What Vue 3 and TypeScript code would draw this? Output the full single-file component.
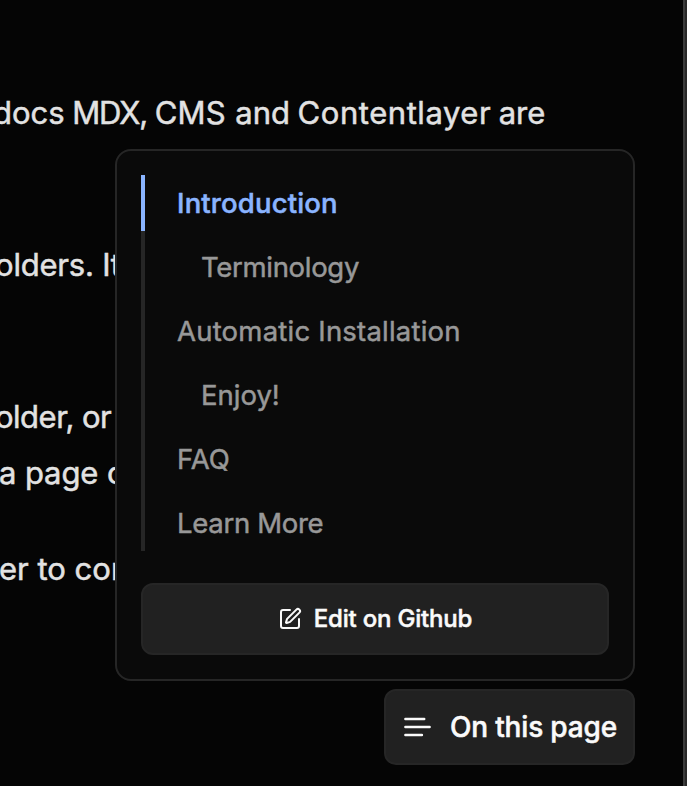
<script setup lang="ts">
interface TocItem {
  title: string
  depth: number
  cls: string
}

const toc: TocItem[] = [
  { title: 'Introduction', depth: 0, cls: 'introduction' },
  { title: 'Terminology', depth: 1, cls: 'terminology' },
  { title: 'Automatic Installation', depth: 0, cls: 'installation' },
  { title: 'Enjoy!', depth: 1, cls: 'enjoy' },
  { title: 'FAQ', depth: 0, cls: 'faq' },
  { title: 'Learn More', depth: 0, cls: 'learn' },
]
const active = 'Introduction'
</script>

<template>
  <div class="page">
    <main class="article">
      <p class="sources">docs <span class="mdx">MDX,</span> <span class="cms">CMS</span> and <span class="wide">Contentlayer</span> are</p>
      <p class="folders">olders. It</p>
      <p class="or">older, or</p>
      <p class="file">a page c</p>
      <p class="order">er to con</p>
    </main>
    <div class="scroll-edge"></div>

    <div class="floating">
      <section class="popover">
        <nav class="toc">
          <a
            v-for="item in toc"
            :key="item.title"
            :class="['item', item.cls, { nested: item.depth > 0, active: item.title === active }]"
          >{{ item.title }}</a>
        </nav>
        <button class="edit" type="button">
          <svg viewBox="0 0 24 24" width="24" height="24" fill="none" stroke="currentColor" stroke-width="2" stroke-linecap="round" stroke-linejoin="round">
            <path d="M12 3H5a2 2 0 0 0-2 2v14a2 2 0 0 0 2 2h14a2 2 0 0 0 2-2v-7" />
            <path d="M18.375 2.625a1 1 0 0 1 3 3l-9.013 9.014a2 2 0 0 1-.853.505l-2.873.84a.5.5 0 0 1-.62-.62l.84-2.873a2 2 0 0 1 .506-.852z" />
          </svg>
          <span>Edit on Github</span>
        </button>
      </section>
      <button class="trigger" type="button">
        <svg viewBox="0 0 32 32" width="32" height="32" fill="none" stroke="currentColor" stroke-width="2.5" stroke-linecap="round">
          <path d="M3.4 8.1h18.8M3.4 16.1h24.2M3.4 24.1h16.5" />
        </svg>
        <span>On this page</span>
      </button>
    </div>
  </div>
</template>

<style>
body {
  background: #050505;
}
</style>

<style scoped>
.page {
  position: relative;
  display: flex;
  justify-content: space-between;
  box-sizing: border-box;
  width: 687px;
  height: 786px;
  overflow: hidden;
  background: #050505;
  color: #e2e2e2;
  font-family: Inter, 'Liberation Sans', sans-serif;
  -webkit-text-stroke: 0.5px currentColor;
}
.article {
  width: 683px;
  padding-top: 85px;
  white-space: nowrap;
  font-size: 31px;
  line-height: 56px;
}
.article p {
  margin: 0 0 96px;
}
.article .or {
  margin-bottom: 0;
  letter-spacing: -0.5px;
}
.article .file {
  margin-bottom: 40px;
  letter-spacing: -0.1px;
}
.article .sources {
  margin-left: -7px;
  word-spacing: -1.2px;
}
.mdx {
  letter-spacing: -1.1px;
}
.cms {
  margin-right: 2px;
  letter-spacing: 0.2px;
}
.wide {
  letter-spacing: 0.55px;
}
.article .folders,
.article .or {
  margin-left: -5px;
}
.article .folders {
  letter-spacing: -0.2px;
}
.article .file,
.article .order {
  margin-left: -1px;
}
.scroll-edge {
  box-sizing: border-box;
  width: 4px;
  border-left: 2px solid #3c3c3c;
  background: #292929;
}
.floating {
  position: absolute;
  top: 149px;
  right: 52px;
  display: flex;
  flex-direction: column;
  align-items: flex-end;
  gap: 8px;
  width: 520px;
}
.popover {
  display: flex;
  flex-direction: column;
  gap: 32px;
  box-sizing: border-box;
  width: 520px;
  height: 532px;
  padding: 24px;
  border: 2px solid #262626;
  border-radius: 16px;
  background: #0a0a0a;
}
.toc {
  display: flex;
  flex-direction: column;
  gap: 8px;
  height: 376px;
  background: linear-gradient(#262626, #262626) left / 4px 100% no-repeat;
}
.item {
  box-sizing: border-box;
  height: 56px;
  padding-left: 36px;
  color: #989898;
  font-size: 27.5px;
  line-height: 56px;
  white-space: nowrap;
}
.introduction {
  letter-spacing: 0.15px;
}
.terminology,
.learn {
  letter-spacing: -0.3px;
}
.installation {
  letter-spacing: 0.22px;
}
.nested {
  padding-left: 60px;
}
.active {
  padding-left: 32px;
  border-left: 4px solid #8ab4ff;
  color: #8ab4ff;
  font-weight: 500;
}
button {
  display: flex;
  align-items: center;
  box-sizing: border-box;
  margin: 0;
  border: 2px solid #262626;
  background: #212121;
  color: #fafafa;
  font-family: inherit;
  font-weight: 500;
  white-space: nowrap;
}
.edit {
  justify-content: center;
  gap: 12px;
  flex: none;
  height: 72px;
  padding: 0 0 1px;
  border-radius: 12px;
  font-size: 24px;
  letter-spacing: -0.2px;
}
.trigger {
  gap: 16px;
  width: 251px;
  height: 76px;
  padding: 0 16px;
  border-radius: 12px;
  font-size: 28px;
  letter-spacing: -0.18px;
}
svg {
  flex: none;
}
</style>
